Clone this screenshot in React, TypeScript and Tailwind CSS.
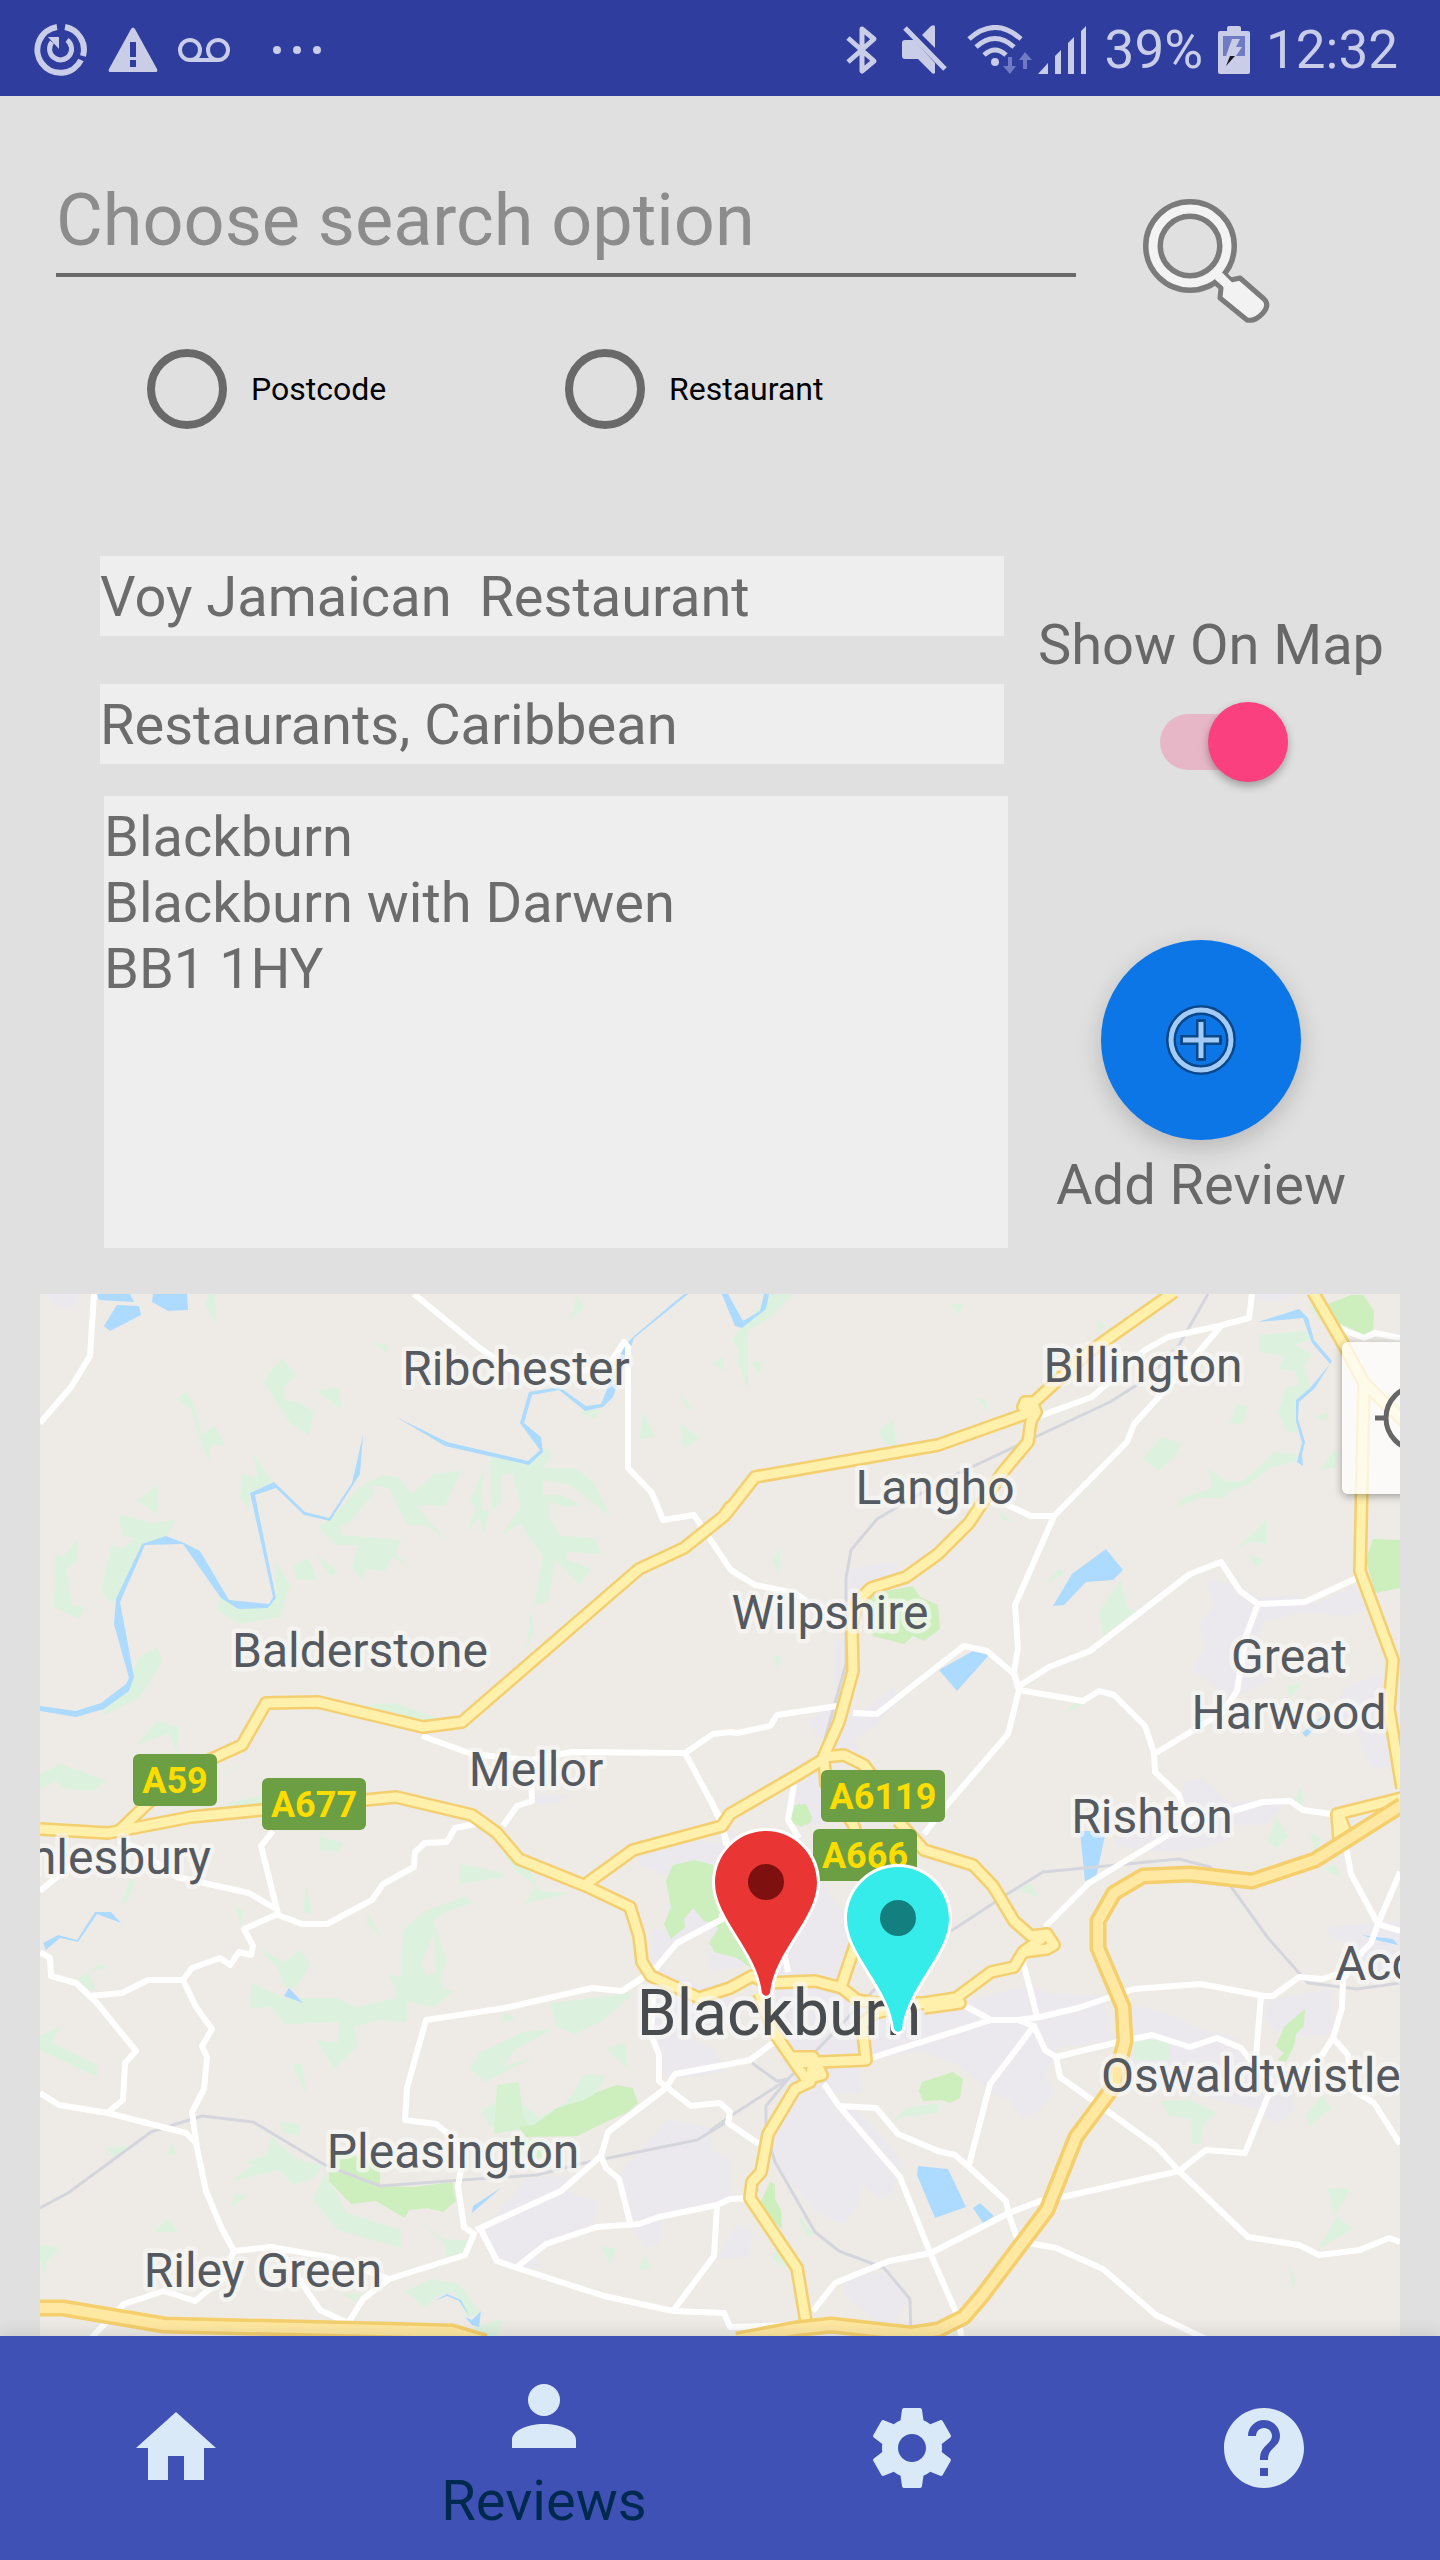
import { MdHelp, MdHome } from "react-icons/md";

/* ---------- Map geometry ---------- */

// The map is surveyed on four sheets (A = NW, B = NE, C = SW, D = SE),
// each with its own grid. A letter in a point list selects the sheet.
const SHEETS: Record<string, [number, number]> = {
  A: [-10, -9],
  B: [670, -9],
  C: [-10, 506],
  D: [670, 506],
};

function plot(list: string): string {
  let origin = SHEETS.A;
  const out: string[] = [];
  for (const token of list.split(" ")) {
    if (SHEETS[token]) {
      origin = SHEETS[token];
      continue;
    }
    const [x, y] = token.split(",").map(Number);
    out.push(`${Math.round(x / 2.24 + origin[0])},${Math.round(y / 2.904 + origin[1])}`);
  }
  return out.join(" ");
}

const urban = [
  "A 35,26 110,26 100,60 75,70 45,50",
  "B 315,825 410,805 430,845 350,880 310,910",
  "B 275,1030 300,1030 300,1180 330,1250 410,1170 430,1200 370,1280 320,1320 340,1360 270,1360 220,1270 280,1210",
  "B 1110,850 1190,880 1230,910 1310,900 1360,925 1440,870 1480,940 1420,960 1330,950 1240,980 1220,1060 1250,1150 1170,1200 1080,1120 1110,1050 1095,980 1130,940",
  "B 1420,1170 1500,1130 1545,1160 1545,1400 1480,1400 1440,1270 1400,1240",
  "B 1215,26 1310,26 1280,50 1215,40",
  "B 1060,1450 1100,1430 1160,1500 1300,1490 1240,1568 1050,1568",
  "D 900,120 1000,60 1180,50 1160,120 1060,150 930,140",
  "D 10,60 250,240 300,330 320,420 290,520 150,520 90,480 0,500 0,330 90,330",
  "B 190,1380 250,1390 250,1568 190,1568",
  "D 110,530 300,550 420,600 560,590 640,560 720,540 760,560 880,570 900,700 780,720 750,800 770,850 740,900 700,930 670,870 630,850 560,770 470,730 330,760 340,850 260,850 330,900 380,970 430,1050 410,1140 380,1160 340,1110 330,1180 300,1230 240,1200 180,1110 140,1060 140,960 190,860",
  "C 1365,160 1460,110 1568,130 1568,350 1440,420 1420,500 1510,540 1568,530 1568,620 1480,690 1530,720 1560,790 1430,810 1400,740 1390,560 1390,370 1420,380 1440,230 1365,190",
  "C 1430,930 1520,950 1530,1020 1568,1040 1568,1160 1420,1210 1350,1220 1320,1090 1380,1000",
  "C 1110,1100 1200,1090 1215,1145 1270,1165 1265,1230 1160,1280 1130,1330 1150,1360 1080,1360 1040,1320 1020,1240",
  "C 1340,1225 1420,1220 1410,1290 1380,1300",
  "D 300,1390 380,1370 450,1440 400,1540 360,1500 300,1440",
  "D 60,1230 95,1255 90,1330 15,1330",
  "D 910,590 1000,610 1090,660 1180,690 1200,760 1300,800 1310,900 1270,945 1230,900 1100,860 900,800",
  "D 1250,580 1390,550 1400,680 1290,690 1240,640",
  "D 1380,370 1545,350 1545,520 1480,520 1450,430 1390,400",
  "A 1120,1480 1210,1480 1190,1500 1140,1510",
];

const meadows = [
  "A 400,26 415,26 419,112 393,55",
  "A 1225,26 1240,65 1210,105",
  "A 765,165 800,175 802,198",
  "A 567,213 595,265 570,295 572,335 605,342 636,370 625,435 582,400 524,285 535,255",
  "A 640,308 692,295 697,360",
  "A 350,312 362,335 385,435 415,410 437,465 405,465 402,512 385,465 360,360 328,335",
  "A 500,490 545,572 492,605 490,650 470,620 475,550 510,560",
  "A 285,580 285,665 240,628",
  "A 200,665 270,690 327,682 305,728 255,755 195,915 180,920 160,890 182,755 210,765 235,735 205,730",
  "A 107,735 105,800 82,825 93,930 120,935 110,970 53,935 55,780 75,790",
  "A 425,905 465,940 535,930 552,905 548,800 583,870 560,965 470,985 420,945",
  "A 285,1055 298,1090 245,1200 165,1250 160,1225 215,1180 245,1080",
  "A 285,1265 335,1285 330,1365 312,1300 240,1335",
  "A 22,1420 70,1390 172,1440 140,1470 70,1460 60,1440 22,1465",
  "A 440,1420 478,1390 420,1440",
  "A 430,1510 520,1480 520,1510",
  "A 750,1220 820,1213 910,1258 880,1265",
  "A 675,680 735,590 790,552 825,558 855,607 905,550 965,540 930,642 865,640 890,680 938,750 890,698 845,698 805,590 760,580 770,605 715,690 695,700 700,725 830,740 820,780 848,820 810,790 795,830 750,825 745,860 722,820 735,755 685,755 645,700",
  "A 590,815 625,792 643,857 597,857",
  "A 640,785 690,830 675,848",
  "A 1030,500 1117,520 1160,470 1168,500 1150,530 1220,530 1262,570 1300,670 1210,580 1150,565 1150,610 1190,610 1235,640 1200,645 1165,630 1165,680 1190,730 1265,735 1278,780 1205,775 1200,795 1256,825 1230,870 1175,800 1160,920 1130,930 1148,790 1100,695 1055,725 1100,645 1080,550 1055,550 1055,630 1035,655",
  "A 1018,530 1010,650 1028,660 1018,725 1005,680 978,715 1000,650 985,625",
  "A 1122,940 1130,1010 1112,1060",
  "A 1450,305 1485,360 1475,360",
  "A 1373,370 1400,438 1365,450",
  "A 1455,400 1500,443 1462,477",
  "A 1555,205 1555,248 1530,228",
  "A 1225,370 1280,360 1268,388",
  "B 135,26 185,26 130,100 85,130 85,305 62,225 65,190 48,160",
  "B 8,225 32,208 28,250",
  "B 95,225 118,225 108,260",
  "B 535,55 568,55 555,85",
  "B 868,105 885,120 870,140",
  "B 595,325 618,335 622,370",
  "B 410,390 418,470 390,460 378,425",
  "B 650,660 682,690 655,680",
  "B 160,765 155,838 138,800",
  "B 140,1075 160,1080 152,1115",
  "B 1230,145 1330,135 1350,155 1310,175 1350,200 1330,235 1345,300 1310,345 1315,430 1290,425 1272,370 1290,300 1320,290 1310,250 1275,245 1285,205 1230,195",
  "B 1180,345 1205,355 1195,400 1165,405",
  "B 1010,440 1052,460 1045,490 1005,540 970,505",
  "B 1115,530 1155,570 1195,570 1265,485 1313,490 1315,510 1255,530 1205,580 1170,595 1150,620 1095,620 1040,650 1060,620 1125,590",
  "B 1395,480 1410,490 1400,530 1368,533",
  "B 900,530 840,605 810,645",
  "B 1248,680 1248,752 1210,745 1178,768",
  "B 1205,782 1242,798 1222,818",
  "B 780,825 795,835 750,870",
  "B 920,855 935,935 955,950 880,1018 872,950",
  "B 820,1215 835,1220 788,1243",
  "B 1340,60 1400,60 1410,150 1370,110",
  "B 1385,370 1350,385 1385,392",
  "B 1290,1165 1330,1155 1300,1195",
  "B 1325,1455 1328,1510 1305,1500",
  "C 650,105 700,125 695,152 648,145",
  "C 960,185 1055,210 1065,225 960,245",
  "C 1060,150 1120,200 1140,265 1210,270 1105,303 1135,250 1090,210",
  "C 225,225 235,240 215,300 207,300",
  "C 618,250 635,330 612,325",
  "C 460,310 480,320 472,365",
  "C 755,325 790,405 755,360",
  "C 975,280 992,300 930,325 905,350 935,470 912,520 905,385 875,475 890,510 918,495 925,550 950,555 905,600 845,585 845,645 780,640 725,660 735,715 682,780 642,698 690,705 692,645 570,650 540,600 490,605 497,530 570,575 690,575 730,600 820,575 820,545 800,505 832,515 835,380 880,325",
  "C 510,430 570,470 605,435 627,478 595,545 570,540 555,490",
  "C 155,475 175,485 130,500 150,555 130,550 105,520 130,500",
  "C 70,655 50,705 150,770 152,805 22,725 22,685",
  "C 610,765 620,860 587,770",
  "C 1165,590 1350,560 1285,640 1220,680 1180,660",
  "C 1060,615 1088,635 1055,645",
  "C 1170,665 1085,730 1060,775 1130,745 1020,820 985,780 1005,735 1105,675",
  "C 1335,705 1340,785 1290,720",
  "C 1240,800 1290,800 1260,870 1200,905 1125,960 1030,950 1010,900 1040,880 1090,870 1140,920 1200,880",
  "C 170,1010 222,1005 190,1042",
  "C 320,995 328,1030 305,1030",
  "C 560,935 605,940 605,975 565,965",
  "C 540,980 600,1045 655,1060 635,1100 590,1118 560,1075 450,1105 500,1060 480,1050 530,1030",
  "C 460,1145 485,1150 450,1182",
  "C 310,1215 332,1255 275,1255",
  "C 660,1085 690,1150 710,1200 830,1250 830,1300 690,1250 635,1160",
  "C 875,1225 925,1275 990,1280 970,1325 930,1320 930,1290",
  "C 22,1290 65,1300 35,1345 35,1385 22,1340",
  "C 1280,1295 1315,1305 1300,1350",
  "C 1375,1320 1392,1360 1365,1365",
  "C 700,1435 745,1435 725,1455",
  "C 840,1425 900,1390 960,1405 1010,1490 980,1500 950,1430 910,1440 885,1475",
  "C 1000,1530 1057,1508 1045,1568 1000,1568",
  "D 1270,50 1295,105 1270,138 1248,125",
  "D 1345,95 1370,110 1355,155",
  "D 1370,200 1400,185 1415,225",
  "D 720,240 735,282 690,262",
  "D 950,700 1028,695 1030,755 950,755",
  "D 1010,875 1075,870 1135,910 1105,940 1100,998 1080,1000 1078,925 1025,915",
  "D 1370,860 1392,895 1342,950 1335,915",
  "D 1383,1128 1435,1130 1400,1205",
  "D 1405,1212 1440,1245 1360,1308",
  "D 1298,1345 1312,1395 1305,1425",
  "D 515,880 510,910 430,920 405,938 440,895",
  "D 195,1200 232,1260 218,1270",
  "D 150,1290 175,1360 138,1335",
];

const parks = [
  "B 1385,55 1435,30 1462,30 1487,75 1485,130 1465,145 1410,110",
  "B 1485,738 1545,740 1545,880 1490,895 1470,800",
  "B 345,900 455,873 470,905 510,930 515,1000 480,1035 455,1020 435,1042 365,1020",
  "B 200,1505 228,1555 218,1568 180,1550",
  "D 190,15 215,12 228,50 205,78 180,65",
  "C 1440,190 1490,173 1530,190 1530,270 1555,335 1545,375 1522,355 1510,350 1485,315 1465,345 1468,370 1435,405 1420,360 1435,310 1425,235",
  "C 1568,345 1568,445 1540,445 1520,415",
  "D 40,330 90,440 95,490 60,460 10,440 0,410",
  "C 1095,950 1130,945 1180,895 1240,870 1270,848 1315,828 1350,835 1362,880 1340,905 1290,935 1225,975 1110,980",
  "C 670,1010 785,1050 785,1120 860,1125 945,1110 955,1165 925,1195 890,1185 850,1190 840,1215 775,1165 720,1172 670,1105",
  "D 545,790 567,810 560,865 538,880 520,872 478,875 468,845 475,820",
  "D 1333,607 1330,655 1312,680 1308,715 1290,760 1270,755 1285,735 1268,715 1285,660",
  "D 135,1110 145,1115 145,1160 158,1190 162,1250 110,1175",
];

const heaths = [
  "C 1045,828 1095,820 1105,915 1120,950 1040,970",
  "C 1060,980 1160,990 1150,1040 1080,1040",
];

const lakes = [
  "A 22,1222 103,1238 158,1213 215,1160 222,1140 188,985 192,912 252,752 305,728 345,748 380,772 445,915 535,925 545,905 492,605 546,572 615,660 670,676 722,575 745,435 740,550 672,685 613,668 550,590 505,610 552,910 533,938 466,940 428,908 343,752 258,756 202,920 233,1138 222,1178 165,1230 103,1254 22,1238",
  "A 820,383 935,455 1115,512 1142,480 1098,402 1118,310 1185,295 1245,350 1280,345 1330,180 1350,150 1465,26 1475,26 1352,155 1305,325 1283,355 1243,365 1185,305 1125,320 1107,400 1145,440 1148,485 1117,522 930,468",
  "A 1550,26 1562,26 1568,60 1568,85",
  "B 26,26 57,120 72,125 125,70 132,26 120,26 112,75 75,105 40,26",
  "A 150,26 225,26 232,48 155,45",
  "A 275,26 352,26 355,72 308,75 273,50",
  "A 195,58 245,62 248,88 180,135 166,120",
  "B 1228,108 1320,70 1340,95 1353,160 1393,222 1355,300 1320,340 1318,390 1333,455 1325,490 1328,525 1315,515 1325,460 1313,395 1313,335 1345,300 1388,228 1348,168 1328,95",
  "B 888,767 925,828 902,857 842,862 792,930 768,932 810,840",
  "B 512,1118 590,1063 625,1075 553,1180",
  "B 1327,1300 1375,1250 1380,1258 1335,1312",
  "C 35,435 30,415 62,392 105,408 145,325 182,325 203,357 150,330 108,412 68,402",
  "C 580,545 612,590 568,568",
  "C 990,1200 992,1180 1057,1123",
  "C 975,1500 990,1510 1010,1485 1005,1530 990,1525",
  "C 905,1455 935,1436 965,1452 985,1500 960,1455 935,1441",
  "D 828,90 888,90 865,225 840,235",
  "D 1460,392 1530,405 1540,422 1500,410",
  "D 465,1063 533,1073 573,1182 505,1214 463,1090",
  "D 590,1185 605,1170 637,1208 612,1228",
];

const railways = [
  "B 1115,26 1050,175 980,270 895,340 520,570 375,680 315,770 305,850 305,1100 250,1350",
  "D 540,380 670,270 745,210 1050,170 1120,195 1170,255 1250,400 1340,530 1450,550 1545,530",
  "D 370,550 240,725 175,810 125,890 125,960 145,1050 235,1255 290,1310 390,1360 448,1450 450,1568",
  "D 0,960 50,915 175,810 150,815 95,765",
  "C 22,1185 85,1140 270,965 385,918 500,935 660,1060 785,1122 1000,1100 1135,1088 1240,1055 1495,988 1568,930",
];

const minorRoads = [
  "A 143,26 135,205 92,295 22,400",
  "A 860,26 1010,185 1110,275 1215,250 1290,245 1330,165 1340,180 1340,532 1393,605 1418,683 1488,668 1568,825 B 60,840 100,870 190,895 300,1000",
  "A 878,1310 990,1362 1120,1380 1215,1357 1468,1360 1530,1305 1568,1298 B 60,1300 135,1280 150,1250 285,1222",
  "B 320,1243 375,1245 510,1105 568,1048 620,1062 680,1130 693,1175",
  "A 1468,1360 1550,1560 C 1560,130",
  "A 1120,1380 1125,1498 C 1092,18 1060,75",
  "C 1000,70 952,82 935,123 885,125 863,150 860,195 790,245 765,290 665,360 610,360 555,335",
  "C 545,90 518,135 555,330 480,375 500,425 495,450 468,440 448,478 425,460 362,488 343,523 265,523 205,560 135,568",
  "C 343,523 372,600 408,665 385,715 397,745 390,840 362,905 375,1010 395,1135 430,1245 458,1310",
  "C 22,440 45,460 48,512 103,530 150,590 238,728 212,765 208,870 175,905",
  "C 22,850 65,885 175,908 350,968 372,995",
  "C 22,265 60,225 120,160",
  "C 200,120 250,145 290,190 330,225 490,270 555,320",
  "C 458,1310 540,1298 680,1330 805,1390 975,1322 995,1260 972,1240 958,1120 970,1040 945,980 910,940 840,930 845,835 888,640 1065,603 1258,545 1325,555 1372,520",
  "C 540,1298 560,1310 650,1480 712,1518 745,1450 805,1390",
  "C 458,1310 430,1390 370,1455 300,1425 210,1465 140,1560",
  "C 1400,490 1450,415 1568,335 D 20,340",
  "C 1325,555 1400,490",
  "C 1000,1250 1190,1135 1278,1035 1295,965 1425,835 1445,795 1568,768 D 90,755 140,705",
  "C 1395,560 1390,680 1410,740 1410,815 1480,888 1545,880 1568,905 D 40,938 110,1000",
  "C 1278,1035 1290,1070 1320,1100 1343,1225",
  "C 1010,1250 1045,1340 1090,1358 1285,1440 1440,1485 1555,1490 1568,1530 D 190,1525",
  "C 1090,1355 1155,1290 1270,1240 1365,1230 1410,1210 1540,1175 1568,1160 D 90,1155",
  "C 1540,1175 1532,1325 1440,1485",
  "B 1215,26 1208,97 1140,118 1025,150 975,190 855,325 740,380",
  "B 1145,118 1050,260 950,405 935,455 770,670 720,672 660,635",
  "B 770,670 683,930 690,1055 680,1125 693,1175 668,1305 530,1510 D 480,100",
  "B 693,1165 760,1108 852,1062 1075,840 1145,805 1188,888 1228,925 1332,922 1450,852",
  "B 1228,925 1200,1020 1180,1180 1150,1240 1000,1360",
  "B 693,1175 835,1208 872,1178 905,1192 975,1280 995,1360 997,1415 1050,1480 1070,1568",
  "B 1390,115 1465,155 1490,140 1545,155",
  "B 1140,1540 1238,1500 1300,1498 1328,1525 1390,1535",
  "D 750,370 850,240 1060,75 1100,40",
  "B 188,1450 175,1555 D 200,110",
  "B 0,1490 20,1550 D 40,130",
  "D 165,440 175,500",
  "D 700,470 735,640",
  "D 560,590 630,640 690,640 725,655 750,725 775,745 785,805 1000,1005 1050,1078 1205,1270 1320,1292 1365,1320 1455,1308 1520,1272 1545,1285",
  "D 360,750 630,640",
  "D 690,640 740,630 825,605 950,550 1100,535 1240,568 1260,568 1320,515 1370,520 1420,500",
  "D 725,655 628,825 580,1060",
  "D 775,745 905,705 990,683 1075,718 1135,690 1190,720 1215,760",
  "D 1235,570 1222,745 1240,800 1260,820",
  "D 255,825 290,890 425,1095 495,1320 555,1500 565,1568",
  "D 290,890 372,895 420,970 510,1018 548,1030 580,1065 662,1165 670,1205 690,1280 775,1300 880,1362 1000,1495 1115,1568",
  "D 230,1485 280,1402 400,1340 495,1315 670,1200 740,1165 800,1150 1050,1078 1112,1015 1198,1025 1250,860 1370,740 1395,690 1415,605 1418,520 1460,440 1480,415 1497,360 1435,215 1425,140",
  "D 1545,210 1497,360 1545,380",
  "D 1395,690 1430,740 1435,840 1488,880 1545,1000",
];

const mainRoads = [
  "C 22,85 175,95 360,48 520,30 820,-10 990,45 1045,95 1095,170 1245,250 1345,310 1365,395 1372,470 1390,510 1498,575 1568,545 D 95,510 130,530 235,525 295,545 330,580 370,590 480,590",
  "C 200,90 265,10 A 330,1440 400,1380 475,1335 528,1213 645,1210 880,1285 968,1270 1365,825 1465,765 1555,670 1568,645 B 35,665 100,558 510,465 720,370",
  "B 720,375 700,355 705,340 725,340 850,195 1040,20",
  "B 722,340 730,370 718,395 712,455 655,545 580,690 510,780 440,848 360,880 330,920 318,1000 320,1120 290,1270 250,1380 200,1420 45,1535 C 1550,75 1350,145 1245,245",
  "B 255,1370 300,1365 345,1395 365,1430",
  "B 255,1380 260,1450 D 320,70 370,250 295,535",
  "D 420,60 480,145 590,190 635,250 680,350 720,395 755,390 770,420 755,432 700,440 680,485 630,500 550,575 480,590 370,620 340,650 350,755 190,765",
  "D 700,440 750,395",
  "D 550,575 560,590 480,605",
  "D 110,560 140,670 215,810 250,800 230,745 180,745",
  "D 230,760 225,820 190,840 130,970 115,1080 95,1110 90,1155 195,1360 215,1515",
  "B 1350,20 1415,165 1465,285 1455,830 1530,1090 1520,1230 1550,1460",
  "B 1465,285 1560,400",
  "D 1408,115 1405,40 1560,-10",
  "D 1435,130 1408,45",
];

const motorways = [
  "D 60,1568 190,1535 270,1525 450,1550 510,1540 570,1500 610,1440 755,1190 820,980 905,830 930,700 925,600 870,430 870,350 905,270 970,222 1075,215 1215,235 1355,175 1440,105 1550,15",
  "C 22,1475 75,1475 300,1525 785,1540 945,1545 1020,1575",
];

const towns = [
  { name: "Ribchester", x: 476, y: 91, anchor: "middle" },
  { name: "Billington", x: 1103, y: 88, anchor: "middle" },
  { name: "Langho", x: 895, y: 210, anchor: "middle" },
  { name: "Wilpshire", x: 790, y: 335, anchor: "middle" },
  { name: "Balderstone", x: 320, y: 373, anchor: "middle" },
  { name: "Great", x: 1249, y: 379, anchor: "middle" },
  { name: "Harwood", x: 1249, y: 435, anchor: "middle" },
  { name: "Mellor", x: 496, y: 492, anchor: "middle" },
  { name: "Rishton", x: 1112, y: 539, anchor: "middle" },
  { name: "Samlesbury", x: 171, y: 580, anchor: "end" },
  { name: "Accrington", x: 1295, y: 686, anchor: "start" },
  { name: "Oswaldtwistle", x: 1061, y: 798, anchor: "start" },
  { name: "Pleasington", x: 413, y: 874, anchor: "middle" },
  { name: "Riley Green", x: 223, y: 993, anchor: "middle" },
] as const;

const shields = [
  { name: "A59", x: 93, y: 460, w: 84 },
  { name: "A677", x: 222, y: 484, w: 104 },
  { name: "A6119", x: 781, y: 476, w: 124 },
  { name: "A666", x: 773, y: 535, w: 104 },
];

function Areas({ shapes, fill }: { shapes: string[]; fill: string }) {
  return (
    <g fill={fill}>
      {shapes.map((s) => (
        <polygon key={s} points={plot(s)} />
      ))}
    </g>
  );
}

function Lines({ paths, stroke, width }: { paths: string[]; stroke: string; width: number }) {
  return (
    <g fill="none" stroke={stroke} strokeWidth={width} strokeLinejoin="round">
      {paths.map((p) => (
        <polyline key={p} points={plot(p)} />
      ))}
    </g>
  );
}

function Pin({ x, y, fill, dot }: { x: number; y: number; fill: string; dot: string }) {
  return (
    <g transform={`translate(${x} ${y})`}>
      <path
        d="M0-51C-28-51-51-28-51 1C-51 36-8 70-4 111Q0 117 4 111C8 70 51 36 51 1C51-28 28-51 0-51Z"
        fill={fill}
        stroke="#fff"
        strokeWidth="6"
        paintOrder="stroke"
      />
      <circle r="18" fill={dot} />
    </g>
  );
}

function TownMap() {
  return (
    <section aria-label="Map" className="relative mx-10 mt-[46px] overflow-hidden bg-[#eeebe6]">
      <svg viewBox="0 0 1360 1042" className="block h-auto w-full" role="img" aria-label="Map of Blackburn">
        <Areas shapes={urban} fill="#ebe9ed" />
        <Areas shapes={meadows} fill="#dcf2df" />
        <Areas shapes={heaths} fill="#d6f1cf" />
        <Areas shapes={parks} fill="#cdeebd" />
        <Areas shapes={lakes} fill="#addaff" />
        <Lines paths={railways} stroke="#d5d6dd" width={3} />
        <Lines paths={minorRoads} stroke="#ffffff" width={6} />
        <Lines paths={mainRoads} stroke="#f4cf6f" width={14} />
        <Lines paths={mainRoads} stroke="#fff0ab" width={9} />
        <Lines paths={motorways} stroke="#f4cf6c" width={17} />
        <Lines paths={motorways} stroke="#ffe8a1" width={10} />
        <g
          fontFamily="Roboto, sans-serif"
          fontSize="48"
          fill="#555960"
          stroke="#f7f7f5"
          strokeOpacity="0.7"
          strokeWidth="9"
          strokeLinejoin="round"
          paintOrder="stroke"
        >
          {towns.map((t) => (
            <text key={t.name} x={t.x} y={t.y} textAnchor={t.anchor}>
              {t.name}
            </text>
          ))}
          <text x="739" y="741" textAnchor="middle" fontSize="64" fill="#484c4f">
            Blackburn
          </text>
        </g>
        <g fontFamily="Roboto, sans-serif" fontSize="36" fontWeight="700" textAnchor="middle">
          {shields.map((s) => (
            <g key={s.name}>
              <rect x={s.x} y={s.y} width={s.w} height="52" rx="6" fill="#6c9f44" />
              <text x={s.x + s.w / 2} y={s.y + 39} fill="#fddc00">
                {s.name}
              </text>
            </g>
          ))}
        </g>
        <Pin x={726} y={588} fill="#ea3535" dot="#7f1010" />
        <Pin x={858} y={624} fill="#36ecea" dot="#13807f" />
      </svg>
      <button
        type="button"
        aria-label="My location"
        className="absolute -right-[94px] top-12 flex size-[152px] items-center justify-center rounded-md bg-white/75 shadow-[0_2px_8px_rgba(0,0,0,0.35)]"
      >
        <svg viewBox="0 0 96 96" className="size-24" fill="none" stroke="#666" strokeWidth="5">
          <circle cx="48" cy="48" r="32" />
          <path d="M5 48h11M80 48h11M48 5v11M48 80v11" />
        </svg>
      </button>
    </section>
  );
}

/* ---------- Status bar ---------- */

function StatusBar() {
  return (
    <header className="flex h-24 items-center justify-between bg-[#2f3d9e] pt-1 pr-[42px] pl-[34px] text-[#c9cde8]">
      <div className="flex items-center">
        <svg viewBox="0 0 54 54" className="size-[54px]" fill="none" stroke="currentColor">
          <path d="M23 4A23 23 0 1 0 47 37M31 4A23 23 0 0 1 49 33" strokeWidth="6" />
          <path d="M33 17A11 11 0 1 1 18 19" strokeWidth="5" />
          <path d="M14 14h11v12z" fill="currentColor" stroke="none" />
        </svg>
        <svg viewBox="0 0 50 46" className="ml-5 h-[46px] w-[50px]">
          <path
            fill="currentColor"
            fillRule="evenodd"
            d="M23 2Q25-1 27 2L49 42Q50 45 48 45H2Q0 45 1 42ZM22 15v15h6V15ZM22 33v7h6v-7Z"
          />
        </svg>
        <svg viewBox="0 0 52 24" className="ml-5 h-6 w-[52px]" fill="none" stroke="currentColor" strokeWidth="4">
          <circle cx="12" cy="12" r="10" />
          <circle cx="40" cy="12" r="10" />
          <path d="M12 22h28" />
        </svg>
        <svg viewBox="0 0 50 10" className="ml-[42px] h-[10px] w-[50px]" fill="currentColor">
          <circle cx="5" cy="5" r="4" />
          <circle cx="25" cy="5" r="4" />
          <circle cx="45" cy="5" r="4" />
        </svg>
      </div>
      <div className="flex items-center">
        <svg viewBox="0 0 32 50" className="h-[50px] w-8" fill="none" stroke="currentColor" strokeWidth="5" strokeLinejoin="round">
          <path d="M2 13L28 36L16 46V4L28 14L2 37" />
        </svg>
        <svg viewBox="0 0 46 50" className="ml-6 h-[50px] w-[46px]" fill="currentColor">
          <path d="M0 18Q0 15 3 15H12L33 38V48Q31 50 29 47L16 34H3Q0 34 0 31Z" />
          <path d="M20 10L29 1Q33-1 33 2V23Z" />
          <path d="M3 3L43 44" stroke="currentColor" strokeWidth="5" />
        </svg>
        <svg viewBox="0 0 68 50" className="ml-[18px] h-[50px] w-[68px]" fill="none" stroke="currentColor" strokeWidth="5">
          <path d="M3 14Q29-9 55 14M10 22Q29 5 48 22M18 30Q29 20 40 30" />
          <circle cx="29" cy="37" r="4" fill="currentColor" stroke="none" />
          <path d="M42 32h4v9h4l-6 8-7-8h5zM57 44v-9h-4l6-8 7 8h-5v9z" fill="#6f7bc2" stroke="none" />
        </svg>
        <svg viewBox="0 0 50 48" className="ml-1 h-12 w-[50px]" fill="currentColor">
          <path d="M0 48L10 37V48ZM17 30L23 24V48H17ZM30 17L36 11V48H30ZM43 5L48 0V48H43Z" />
        </svg>
        <span className="ml-[17px] text-[53px] leading-[62px]">39%</span>
        <svg viewBox="0 0 32 48" className="ml-[15px] h-12 w-8">
          <path fill="currentColor" d="M9 5V2Q9 0 11 0H21Q23 0 23 2V5H30Q32 5 32 7V46Q32 48 30 48H2Q0 48 0 46V7Q0 5 2 5Z" />
          <path fill="#6f7bc2" d="M5 10h22v20H5z" />
          <path fill="currentColor" d="M14 13h8l-4 8h6l-6 9H8z" />
          <path fill="#16181f" d="M12 30h5l-9 10z" />
        </svg>
        <time className="ml-4 text-[53px] leading-[62px]">12:32</time>
      </div>
    </header>
  );
}

/* ---------- Search and details ---------- */

function SearchGlass() {
  return (
    <svg viewBox="0 0 144 144" className="size-36" strokeLinejoin="round">
      <circle cx="54" cy="54" r="37" fill="none" stroke="#7b7b7b" strokeWidth="20" />
      <path
        d="M84 78L95 88L104 86L128 107Q134 113 127 121Q119 130 111 128L84 106L85 96L75 87Z"
        fill="#f2f2f2"
        stroke="#7b7b7b"
        strokeWidth="5"
      />
      <circle cx="54" cy="54" r="37" fill="none" stroke="#f3f3f3" strokeWidth="9" />
      <path d="M78 78L94 94" stroke="#f3f3f3" strokeWidth="8" />
    </svg>
  );
}

function SearchForm() {
  return (
    <form>
      <div className="flex items-start">
        <input
          type="text"
          aria-label="Search"
          placeholder="Choose search option"
          className="ml-14 h-[99px] min-w-0 flex-1 border-b-4 border-[#6a6a6a] bg-transparent pb-[11px] text-[72px] leading-[84px] outline-none placeholder:text-[#8c8c8c] placeholder:opacity-100"
        />
        <button type="button" aria-label="Search" className="mt-[14px] mr-[160px] ml-[60px]">
          <SearchGlass />
        </button>
      </div>
      <fieldset className="mt-[13px] ml-[147px] flex">
        {["Postcode", "Restaurant"].map((name) => (
          <label key={name} className="flex w-[418px] items-center gap-6 text-[32px] leading-10 text-black">
            <input
              type="radio"
              name="search-by"
              className="size-20 appearance-none rounded-full border-8 border-[#696969] checked:bg-[#696969]"
            />
            {name}
          </label>
        ))}
      </fieldset>
    </form>
  );
}

function Details() {
  return (
    <section className="mt-[127px] flex text-[56px] leading-[66px] text-[#686868]">
      <div className="ml-[100px] flex min-w-0 flex-1 flex-col text-[#6c6c6c]">
        <h1 className="mr-1 bg-[#eeeeee] pt-2 pb-[6px] whitespace-pre">{"Voy Jamaican  Restaurant"}</h1>
        <p className="mt-12 mr-1 bg-[#eeeeee] pt-2 pb-[6px]">Restaurants, Caribbean</p>
        <address className="mt-8 ml-1 min-h-[452px] flex-1 bg-[#eeeeee] pt-2 pb-[6px] not-italic">
          Blackburn
          <br />
          Blackburn with Darwen
          <br />
          BB1 1HY
        </address>
      </div>
      <div className="flex w-[432px] flex-col pt-14">
        <label htmlFor="show-on-map" className="pr-[26px] text-center">
          Show On Map
        </label>
        <div className="mt-6 flex justify-center">
          <span className="relative flex h-20 w-32 items-center">
            <span className="h-14 w-full rounded-full bg-[#e7b7c8]" />
            <input
              id="show-on-map"
              type="checkbox"
              role="switch"
              defaultChecked
              className="absolute top-0 right-0 size-20 appearance-none rounded-full bg-[#fb407f] shadow-[0_4px_8px_rgba(0,0,0,0.3)]"
            />
          </span>
        </div>
        <div className="mt-[158px] flex flex-col items-center gap-3 pr-[46px]">
          <button
            type="button"
            aria-labelledby="add-review"
            className="flex size-[200px] items-center justify-center rounded-full bg-[#0d76e7] shadow-[0_8px_24px_rgba(0,0,0,0.18)]"
          >
            <svg viewBox="0 0 72 72" className="size-[72px]" fill="none">
              <g stroke="#07478b">
                <circle cx="36" cy="36" r="30" strokeWidth="10" />
                <path d="M36 15v42M15 36h42" strokeWidth="10" />
              </g>
              <circle cx="36" cy="36" r="24" stroke="#0d76e7" strokeWidth="1" />
              <g stroke="#a3cbf5" strokeWidth="5">
                <circle cx="36" cy="36" r="30" />
                <path d="M36 18v36M18 36h36" />
              </g>
            </svg>
          </button>
          <span id="add-review">Add Review</span>
        </div>
      </div>
    </section>
  );
}

/* ---------- Bottom navigation ---------- */

function PersonIcon() {
  return (
    <svg viewBox="0 0 24 24" className="size-24" fill="currentColor">
      <path d="M12 12a4 4 0 1 0 0-8a4 4 0 0 0 0 8zM12 14c-4.420 0-8 1.790-8 4v2h16v-2c0-2.210-3.580-4-8-4z" />
    </svg>
  );
}

function GearIcon() {
  return (
    <svg viewBox="0 0 24 24" className="size-24" fill="currentColor">
      <path d="M19.430 12.980c.04-.32.07-.64.07-.98s-.03-.66-.07-.98l2.110-1.650c.19-.15.24-.42.12-.64l-2-3.460c-.12-.22-.39-.3-.61-.22l-2.490 1c-.52-.4-1.080-.73-1.690-.98l-.38-2.650C14.460 2.180 14.250 2 14 2h-4c-.25 0-.46.18-.49.42l-.38 2.650c-.61.25-1.170.59-1.690.98l-2.490-1c-.23-.09-.49 0-.61.22l-2 3.460c-.13.22-.07.49.12.64l2.110 1.650c-.04.32-.07.65-.07.98s.03.66.07.98l-2.110 1.650c-.19.15-.24.42-.12.64l2 3.460c.12.22.39.3.61.22l2.490-1c.52.4 1.080.73 1.690.98l.38 2.650c.03.24.24.42.49.42h4c.25 0 .46-.18.49-.42l.38-2.650c.61-.25 1.170-.59 1.690-.98l2.490 1c.23.09.49 0 .61-.22l2-3.460c.12-.22.07-.49-.12-.64l-2.110-1.650zM12 15.500c-1.930 0-3.500-1.570-3.500-3.500s1.570-3.500 3.500-3.500 3.500 1.570 3.500 3.500-1.570 3.500-3.500 3.500z" />
    </svg>
  );
}

function BottomNav() {
  return (
    <nav className="relative grid h-[224px] grid-cols-[11fr_12fr_11fr_11fr] items-center justify-items-center bg-[#3f51b4] text-[#dae9f7] shadow-[0_-2px_16px_rgba(0,0,0,0.12)]">
      <a href="#home" aria-label="Home">
        <MdHome className="size-24" />
      </a>
      <a href="#reviews" aria-current="page" className="flex flex-col items-center gap-1 self-start pt-8">
        <PersonIcon />
        <span className="text-[56px] leading-[66px] text-[#00294f]">Reviews</span>
      </a>
      <a href="#settings" aria-label="Settings">
        <GearIcon />
      </a>
      <a href="#help" aria-label="Help">
        <MdHelp className="size-24" />
      </a>
    </nav>
  );
}

export default function App() {
  return (
    <div className="flex min-h-screen flex-col bg-[#e0e0e0] font-[Roboto,sans-serif]">
      <StatusBar />
      <main className="flex-1 pt-[82px]">
        <SearchForm />
        <Details />
        <TownMap />
      </main>
      <BottomNav />
    </div>
  );
}
